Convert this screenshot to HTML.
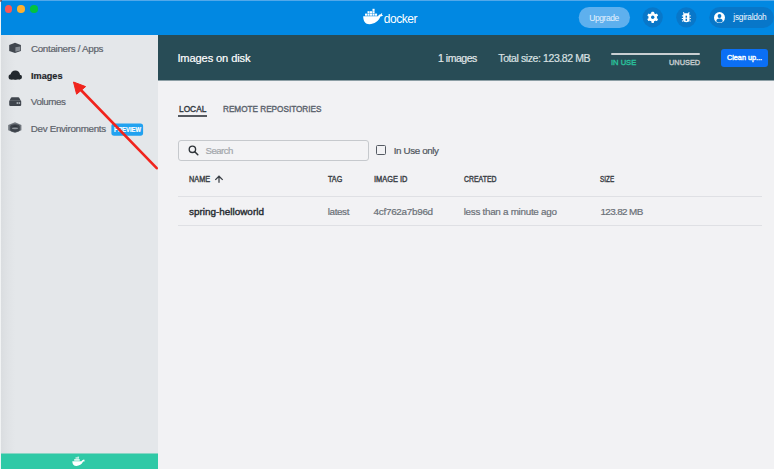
<!DOCTYPE html>
<html><head><meta charset="utf-8">
<style>
*{box-sizing:border-box;margin:0;padding:0}
html,body{width:774px;height:469px;overflow:hidden;background:#f2f2f4;font-family:"Liberation Sans",sans-serif;position:relative}
.a{position:absolute}
.t{position:absolute;white-space:nowrap;line-height:12px;-webkit-text-stroke:0.2px currentColor}
.sb{-webkit-text-stroke:0.4px currentColor}
#title{left:0;top:0;width:774px;height:35px;background:#0188e2}
.dot{position:absolute;width:7.5px;height:7.5px;border-radius:50%;top:5px}
#side{left:0;top:35px;width:158px;height:434px;background:#e4e7ea}
#sideshadow{left:1px;top:35px;width:14px;height:434px;background:linear-gradient(to right,#dadde0,#e0e3e6 50%,#e4e7ea)}
#lborder{left:0;top:0;width:1px;height:469px;background:#f1f3f4}
#green{left:0;top:454px;width:158px;height:15px;background:#2fc9a6;box-shadow:0 -1px 0 #88d6c5}
.nav{left:31px;font-size:9.5px;color:#5d636b;letter-spacing:-0.18px}
#hdr{left:158px;top:35px;width:616px;height:45px;background:#284c56;box-shadow:0 1px 0 #8d9fa5}
.col{font-size:7.5px;font-weight:bold;color:#3a3f45}
.cell{font-size:9.6px;color:#6a7077;letter-spacing:-0.13px}
.sep{position:absolute;left:178px;width:584px;height:1px;background:#dfe0e4}
</style></head><body>
<div id="title" class="a">
  <div class="dot" style="left:4.8px;background:#fd5754"></div>
  <div class="dot" style="left:17.4px;background:#feb02e"></div>
  <div class="dot" style="left:30px;background:#03c23f"></div>
  <svg class="a" style="left:0;top:0" width="774" height="35" viewBox="0 0 774 35">
    <!-- docker whale -->
    <g fill="#fff">
      <path d="M363.2 16.2 L378.2 16.2 C378.6 15 379.6 14.2 380.6 14.4 C381.2 13.6 381.6 13.2 382.2 13.4 L381.8 14.8 C382.4 15 382.8 15.2 383 15.6 C382.2 16.2 381.2 16.6 380.4 16.6 C378.6 21.4 374.4 24.2 369.4 24.2 C365.2 24.2 363.2 21 363.2 16.2 Z"/>
      <rect x="365" y="13.6" width="2.1" height="2.1"/>
      <rect x="367.5" y="13.6" width="2.1" height="2.1"/>
      <rect x="370" y="13.6" width="2.1" height="2.1"/>
      <rect x="372.5" y="13.6" width="2.1" height="2.1"/>
      <rect x="375" y="13.6" width="2.1" height="2.1"/>
      <rect x="367.5" y="11.2" width="2.1" height="2.1"/>
      <rect x="370" y="11.2" width="2.1" height="2.1"/>
      <rect x="372.5" y="11.2" width="2.1" height="2.1"/>
      <rect x="372.5" y="8.8" width="2.1" height="2.1"/>
    </g>
    <!-- upgrade pill -->
    <rect x="578.7" y="7" width="51.3" height="21" rx="10.5" fill="#5eb0ee"/>
    <!-- gear circle -->
    <circle cx="652.7" cy="17.3" r="10.1" fill="#0877c9"/>
    <circle cx="686.3" cy="17.3" r="10.1" fill="#0877c9"/>
    <rect x="709.3" y="6.9" width="64.5" height="21" rx="10.5" fill="#0877c9"/>
    <!-- gear -->
    <g transform="translate(652.7 17.3)" fill="#fff">
      <g id="teeth">
        <rect x="-1.3" y="-5.6" width="2.6" height="11.2" rx="0.6"/>
        <rect x="-1.3" y="-5.6" width="2.6" height="11.2" rx="0.6" transform="rotate(60)"/>
        <rect x="-1.3" y="-5.6" width="2.6" height="11.2" rx="0.6" transform="rotate(120)"/>
      </g>
      <circle r="4.2"/>
      <circle r="1.7" fill="#0877c9"/>
    </g>
    <!-- bug -->
    <g transform="translate(686.3 17.3)" fill="#fff">
      <path d="M-3.2 -2.2 C-3.2 -3.4 -2 -4 0 -4 C2 -4 3.2 -3.4 3.2 -2.2 L3.2 2.8 C3.2 4.2 1.8 5 0 5 C-1.8 5 -3.2 4.2 -3.2 2.8 Z"/>
      <path d="M-2 -3.4 L-3 -4.9 M2 -3.4 L3 -4.9 M-3.2 -1.2 L-4.4 -1.6 M3.2 -1.2 L4.4 -1.6 M-3.2 1.2 L-4.5 1.2 M3.2 1.2 L4.5 1.2 M-3.2 3.4 L-4.3 3.9 M3.2 3.4 L4.3 3.9" stroke="#fff" stroke-width="1.1" fill="none"/>
      <rect x="-0.75" y="-1.6" width="1.5" height="2" fill="#0877c9"/>
      <rect x="-0.75" y="1.4" width="1.5" height="2.1" fill="#0877c9"/>
    </g>
    <!-- user -->
    <g transform="translate(719.5 17.6)">
      <circle r="5.5" fill="#fff"/>
      <circle cy="-1.6" r="1.9" fill="#0877c9"/>
      <path d="M-3.3 3.6 C-2.8 1.6 -1.6 1 0 1 C1.6 1 2.8 1.6 3.3 3.6 C2.4 4.5 1.2 4.9 0 4.9 C-1.2 4.9 -2.4 4.5 -3.3 3.6 Z" fill="#0877c9"/>
    </g>
  </svg>
</div>

<div id="side" class="a"></div>
<div id="sideshadow" class="a"></div>
<div id="green" class="a"></div>
<div class="a" style="left:0;top:0;width:774px;height:1px;background:#52a8ea"></div>
<div id="lborder" class="a"></div>
<div class="a" style="left:0;top:0;width:2px;height:2px;background:#7a3a30;opacity:0.7;border-radius:0 0 2px 0"></div>
<svg class="a" style="left:0;top:35px" width="158" height="434" viewBox="0 35 158 434">
  <!-- containers icon -->
  <path d="M15 42.8 L20.9 45 L20.9 51 L15 53.1 L9.2 51 L9.2 45 Z" fill="#41474f"/>
  <path d="M15.4 47.2 L20.2 46.4 L20.2 50.6 L15.4 51.8 Z" fill="#878d94"/>
  <!-- cloud -->
  <g fill="#22282e">
    <circle cx="11.1" cy="76.9" r="2.55"/>
    <ellipse cx="15.3" cy="75.1" rx="4.7" ry="4.6"/>
    <circle cx="19.7" cy="77.1" r="2.35"/>
    <rect x="11.1" y="76" width="8.6" height="3.45"/>
  </g>
  <!-- volume -->
  <path d="M9.2 101.2 L10.6 98.4 C11 97.6 11.6 97.3 12.4 97.3 L17.8 97.3 C18.6 97.3 19.2 97.6 19.6 98.4 L21.2 101.2 L21.2 105.1 C21.2 105.6 20.9 105.9 20.4 105.9 L10 105.9 C9.5 105.9 9.2 105.6 9.2 105.1 Z" fill="#3f454d"/>
  <rect x="9.2" y="100.2" width="12" height="0.6" fill="#9ba1a7" opacity="0.5"/>
  <rect x="16.6" y="102.1" width="1.5" height="1.9" fill="#a4aab0"/>
  <rect x="18.6" y="102.1" width="1.5" height="1.9" fill="#a4aab0"/>
  <!-- dev env -->
  <path d="M15 122.3 L21.4 125 L21.4 130.3 L15 132.9 L8.2 130.3 L8.2 125 Z" fill="#70767d"/>
  <path d="M10.2 126.6 C10.2 125 12.4 124.2 15 124.2 C17.6 124.2 19.8 125 19.8 126.6 L19.8 130 C19.8 131.2 17.6 132 15 132 C12.4 132 10.2 131.2 10.2 130 Z" fill="#3d434b"/>
  <ellipse cx="15" cy="128.3" rx="3.2" ry="0.9" fill="#8d9399"/>
  <ellipse cx="15" cy="126.2" rx="2.6" ry="0.8" fill="#2e343b"/>
  <!-- whale in green bar -->
  <g fill="#fff">
    <path d="M72.3 461.2 L81.5 461.2 C81.8 460.4 82.5 459.8 83.2 459.9 C83.6 459.4 83.9 459 84.3 459.2 L84 460.3 C84.5 460.4 84.8 460.6 85 460.9 C84.4 461.4 83.7 461.6 83.1 461.6 C81.8 464.5 79.3 465.9 76.4 465.9 C73.8 465.9 72.3 464.2 72.3 461.2 Z"/>
    <rect x="74.2" y="459" width="5.5" height="1.8" opacity="0.8"/>
    <rect x="75.5" y="457.2" width="3.5" height="1.6" opacity="0.7"/>
    <rect x="77.5" y="456.6" width="1.6" height="1" opacity="0.7"/>
  </g>
  <!-- preview badge -->
  <rect x="111.4" y="123.4" width="31.7" height="12.3" rx="2.6" fill="#21a2f0"/>
</svg>

<div id="hdr" class="a"></div>
<div class="a" style="left:611px;top:52.5px;width:89px;height:2.3px;background:#c9cfd2;border-radius:1px"></div>
<div class="a" style="left:720.7px;top:49px;width:47.8px;height:17.5px;background:#0b6ff5;border-radius:3px"></div>

<div class="a" style="left:178.1px;top:115.1px;width:28.8px;height:1.8px;background:#55595f"></div>

<div class="a" style="left:178px;top:140px;width:190.6px;height:21px;border:1px solid #c6c9cd;border-radius:3px;background:#f3f3f5"></div>
<svg class="a" style="left:186px;top:143px" width="16" height="16" viewBox="186 143 16 16">
  <circle cx="192.4" cy="149.3" r="3.2" fill="none" stroke="#2f3439" stroke-width="1.35"/>
  <path d="M194.8 151.7 L197.8 154.7" stroke="#2f3439" stroke-width="1.5" stroke-linecap="round"/>
</svg>
<div class="a" style="left:376.4px;top:145.2px;width:10.1px;height:10.3px;border:1.6px solid #555b63;border-radius:1.5px"></div>

<svg class="a" style="left:213px;top:175px" width="12" height="10" viewBox="213 175 12 10">
  <path d="M219 182.8 L219 176.4 M215.3 179.9 L219 176.2 L222.7 179.9" stroke="#3a3f45" stroke-width="1.25" fill="none"/>
</svg>
<div class="sep" style="top:196px"></div>
<div class="sep" style="top:225px"></div>

<div class="t" id="t0" style="left:30.90px;top:43.01px;font-size:9.8px;color:#5d636b;letter-spacing:-0.298px;">Containers / Apps<span class="bm" style="display:inline-block;width:0;height:0"></span></div>
<div class="t" id="t1" style="left:31.00px;top:70.01px;font-size:9.7px;color:#1f252b;font-weight:bold;transform:scaleX(0.9425);transform-origin:0 0;">Images<span class="bm" style="display:inline-block;width:0;height:0"></span></div>
<div class="t" id="t2" style="left:30.80px;top:96.01px;font-size:9.8px;color:#5d636b;letter-spacing:-0.413px;">Volumes<span class="bm" style="display:inline-block;width:0;height:0"></span></div>
<div class="t" id="t3" style="left:30.80px;top:123.01px;font-size:9.8px;color:#5d636b;letter-spacing:-0.316px;">Dev Environments<span class="bm" style="display:inline-block;width:0;height:0"></span></div>
<div class="t" id="t4" style="left:113.70px;top:124.00px;font-size:6.3px;color:#ffffff;font-weight:bold;transform:scaleX(0.9279);transform-origin:0 0;">PREVIEW<span class="bm" style="display:inline-block;width:0;height:0"></span></div>
<div class="t" id="t5" style="left:177.40px;top:52.01px;font-size:11.1px;color:#ffffff;letter-spacing:-0.113px;">Images on disk<span class="bm" style="display:inline-block;width:0;height:0"></span></div>
<div class="t" id="t6" style="left:437.90px;top:52.00px;font-size:10.5px;color:#e2e8ea;letter-spacing:-0.451px;">1 images<span class="bm" style="display:inline-block;width:0;height:0"></span></div>
<div class="t" id="t7" style="left:498.30px;top:52.00px;font-size:10.5px;color:#dae1e3;letter-spacing:-0.404px;">Total size: 123.82 MB<span class="bm" style="display:inline-block;width:0;height:0"></span></div>
<div class="t sb" id="t8" style="left:611.00px;top:57.31px;font-size:7.8px;color:#2ac09b;transform:scaleX(0.9692);transform-origin:0 0;">IN USE<span class="bm" style="display:inline-block;width:0;height:0"></span></div>
<div class="t sb" id="t9" style="left:668.50px;top:57.31px;font-size:7.8px;color:#c4cacd;transform:scaleX(0.9461);transform-origin:0 0;">UNUSED<span class="bm" style="display:inline-block;width:0;height:0"></span></div>
<div class="t sb" id="t10" style="left:727.00px;top:52.00px;font-size:7.3px;color:#ffffff;transform:scaleX(0.9925);transform-origin:0 0;">Clean up...<span class="bm" style="display:inline-block;width:0;height:0"></span></div>
<div class="t sb" id="t11" style="left:178.90px;top:103.00px;font-size:9.6px;color:#33383e;transform:scaleX(0.8685);transform-origin:0 0;">LOCAL<span class="bm" style="display:inline-block;width:0;height:0"></span></div>
<div class="t sb" id="t12" style="left:222.70px;top:103.00px;font-size:9.6px;color:#5a626c;transform:scaleX(0.8523);transform-origin:0 0;">REMOTE REPOSITORIES<span class="bm" style="display:inline-block;width:0;height:0"></span></div>
<div class="t" id="t13" style="left:205.50px;top:145.00px;font-size:9.6px;color:#a2a6ab;letter-spacing:-0.512px;">Search<span class="bm" style="display:inline-block;width:0;height:0"></span></div>
<div class="t" id="t14" style="left:393.70px;top:145.01px;font-size:9.8px;color:#4f555c;letter-spacing:-0.371px;">In Use only<span class="bm" style="display:inline-block;width:0;height:0"></span></div>
<div class="t sb" id="t15" style="left:188.90px;top:173.01px;font-size:8.3px;color:#3a3f45;transform:scaleX(0.8798);transform-origin:0 0;">NAME<span class="bm" style="display:inline-block;width:0;height:0"></span></div>
<div class="t sb" id="t16" style="left:328.10px;top:173.01px;font-size:8.3px;color:#3a3f45;transform:scaleX(0.8695);transform-origin:0 0;">TAG<span class="bm" style="display:inline-block;width:0;height:0"></span></div>
<div class="t sb" id="t17" style="left:374.00px;top:173.01px;font-size:8.3px;color:#3a3f45;transform:scaleX(0.8916);transform-origin:0 0;">IMAGE ID<span class="bm" style="display:inline-block;width:0;height:0"></span></div>
<div class="t sb" id="t18" style="left:464.20px;top:173.01px;font-size:8.3px;color:#3a3f45;transform:scaleX(0.8325);transform-origin:0 0;">CREATED<span class="bm" style="display:inline-block;width:0;height:0"></span></div>
<div class="t sb" id="t19" style="left:600.40px;top:173.01px;font-size:8.3px;color:#3a3f45;transform:scaleX(0.7669);transform-origin:0 0;">SIZE<span class="bm" style="display:inline-block;width:0;height:0"></span></div>
<div class="t sb" id="t20" style="left:189.00px;top:206.01px;font-size:9.9px;color:#272c32;transform:scaleX(1.0033);transform-origin:0 0;">spring-helloworld<span class="bm" style="display:inline-block;width:0;height:0"></span></div>
<div class="t" id="t21" style="left:327.70px;top:206.01px;font-size:9.9px;color:#6a7077;letter-spacing:-0.372px;">latest<span class="bm" style="display:inline-block;width:0;height:0"></span></div>
<div class="t" id="t22" style="left:373.60px;top:206.01px;font-size:9.9px;color:#6a7077;letter-spacing:-0.283px;">4cf762a7b96d<span class="bm" style="display:inline-block;width:0;height:0"></span></div>
<div class="t" id="t23" style="left:463.70px;top:206.01px;font-size:9.9px;color:#6a7077;letter-spacing:-0.294px;">less than a minute ago<span class="bm" style="display:inline-block;width:0;height:0"></span></div>
<div class="t" id="t24" style="left:600.50px;top:206.01px;font-size:9.9px;color:#6a7077;letter-spacing:-0.622px;">123.82 MB<span class="bm" style="display:inline-block;width:0;height:0"></span></div>
<div class="t" id="t25" style="left:589.30px;top:11.51px;font-size:8.5px;color:#e4f1fd;letter-spacing:-0.430px;-webkit-text-stroke:0;">Upgrade<span class="bm" style="display:inline-block;width:0;height:0"></span></div>
<div class="t" id="t26" style="left:733.30px;top:11.01px;font-size:8.3px;color:#f4f9fe;letter-spacing:-0.244px;-webkit-text-stroke:0;">jsgiraldoh<span class="bm" style="display:inline-block;width:0;height:0"></span></div>
<div class="t" id="t27" style="left:383.80px;top:12.61px;font-size:12px;color:#ffffff;letter-spacing:-0.484px;-webkit-text-stroke:0;">docker<span class="bm" style="display:inline-block;width:0;height:0"></span></div>
<svg class="a" style="left:0;top:0" width="774" height="469" viewBox="0 0 774 469">
  <path d="M156.7 168.2 L79 88" stroke="#f0241d" stroke-width="2.6" stroke-linecap="round"/>
  <path d="M73.5 82 L85.6 86.6 L76.6 94.2 Z" fill="#f0241d" stroke="#f0241d" stroke-width="1" stroke-linejoin="round"/>
</svg>
</body></html>
